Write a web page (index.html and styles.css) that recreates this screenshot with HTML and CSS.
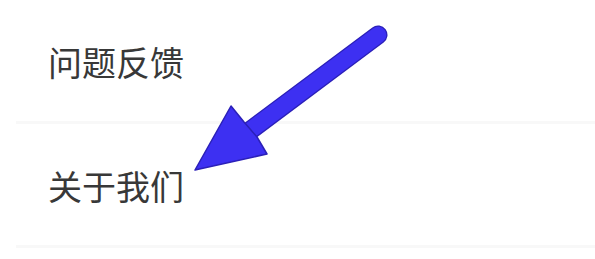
FILE: index.html
```html
<!DOCTYPE html>
<html lang="zh-CN">
<head>
    <meta charset="UTF-8">
    <meta name="viewport" content="width=device-width, initial-scale=1.0">
    <title>设置</title>
    <link rel="stylesheet" href="styles.css">
</head>
<body>
    <div class="menu">
        <div class="menu-item">问题反馈</div>
        <div class="menu-item">关于我们</div>

        <!-- annotation arrow over the list -->
        <svg class="pointer" width="595" height="259" viewBox="0 0 595 259">
            <line x1="378" y1="35" x2="248" y2="132" stroke="#2b20b8" stroke-width="19" stroke-linecap="round"/>
            <line x1="378" y1="35" x2="248" y2="132" stroke="#3d30f2" stroke-width="16.5" stroke-linecap="round"/>
            <polygon points="195,170 231,106 244,122 257,137 267,154" fill="#3d30f2" stroke="#2b20b8" stroke-width="1.5" stroke-linejoin="round"/>
        </svg>
    </div>
</body>
</html>
```

FILE: styles.css
```css
body {
    margin: 0;
    background: #ffffff;
    font-family: "Noto Sans CJK SC", "Noto Sans", sans-serif;
}

.menu {
    position: relative;
    width: 595px;
    height: 259px;
    overflow: hidden;
}

.menu-item {
    margin-left: 16px;
    padding: 45px 0 42px 32px;
    font-size: 34px;
    line-height: 34px;
    color: #383838;
    border-bottom: 3px solid #f8f8f8;
}

.pointer {
    position: absolute;
    top: 0;
    left: 0;
}
```
